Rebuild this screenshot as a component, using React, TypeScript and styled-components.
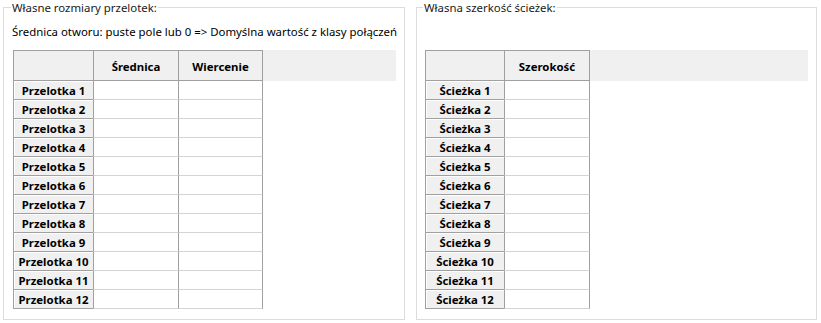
import styled, { createGlobalStyle } from "styled-components";

const GlobalStyle = createGlobalStyle`
    body {
        margin: 0;
        background: #ffffff;
        font-family: "Noto Sans", "DejaVu Sans", sans-serif;
        font-size: 11.4px;
        color: #000000;
    }
`

interface Column {
    title: string;
    width: number;
}

interface GridProps {
    rowLabel: string;
    columns: Column[];
    headWidth: number;
}

function DataGrid({rowLabel, columns, headWidth}: GridProps) {
    const rows = Array.from({length: 12}, (_, i) => `${rowLabel} ${i + 1}`);
    return (
        <Grid>
            <HeaderRow>
                <CornerCell $width={headWidth}/>
                {columns.map((c, i) => (
                    <ColumnHead key={c.title} $width={c.width} $last={i === columns.length - 1}>{c.title}</ColumnHead>
                ))}
            </HeaderRow>
            {rows.map(r => (
                <BodyRow key={r}>
                    <RowHead $width={headWidth}>{r}</RowHead>
                    {columns.map((c, i) => (
                        <DataCell key={c.title} $width={c.width} $last={i === columns.length - 1}/>
                    ))}
                </BodyRow>
            ))}
        </Grid>
    )
}

function App() {
    return (
        <>
            <GlobalStyle/>
            <Page>
                <GroupBox $width={402} $padLeft={9}>
                    <Legend>Własne rozmiary przelotek:</Legend>
                    <Hint>Średnica otworu: puste pole lub 0 =&gt; Domyślna wartość z klasy połączeń</Hint>
                    <DataGrid
                        rowLabel="Przelotka"
                        headWidth={80}
                        columns={[{title: "Średnica", width: 85}, {title: "Wiercenie", width: 85}]}
                    />
                </GroupBox>
                <GroupBox $width={401} $padLeft={8}>
                    <Legend>Własna szerkość ścieżek:</Legend>
                    <Hint/>
                    <DataGrid
                        rowLabel="Ścieżka"
                        headWidth={79}
                        columns={[{title: "Szerokość", width: 86}]}
                    />
                </GroupBox>
            </Page>
        </>
    )
}

const Page = styled.div`
    display: flex;
    gap: 11px;
    padding: 0 0 0 3px;
`

const GroupBox = styled.fieldset<{$width: number; $padLeft: number}>`
    box-sizing: border-box;
    width: ${p => p.$width}px;
    flex: none;
    min-width: 0;
    margin: 0;
    padding: 0 8px 10px ${p => p.$padLeft}px;
    border: 1px solid #dcdcdc;
`

const Legend = styled.legend`
    margin-left: -2px;
    padding: 0 1px;
    line-height: 15px;
    color: #1a1a1a;
`

const Hint = styled.div`
    height: 15px;
    line-height: 15px;
    margin: 9px 0 11px -1px;
    white-space: nowrap;
`

const Grid = styled.div`
    display: flex;
    flex-direction: column;
`

const HeaderRow = styled.div`
    display: flex;
    height: 31px;
    background: #f0f0f0;
`

const Cell = styled.div<{$width: number; $last?: boolean}>`
    box-sizing: border-box;
    width: ${p => p.$width}px;
    flex: none;
    display: flex;
    align-items: center;
    justify-content: center;
    border-left: 1px solid #a0a0a0;
    border-right: ${p => p.$last ? "1px solid #a0a0a0" : "none"};
`

const CornerCell = styled(Cell)`
    border-top: 1px solid #a0a0a0;
    border-bottom: 1px solid #a0a0a0;
    background: #f0f0f0;
`

const ColumnHead = styled(Cell)`
    border-top: 1px solid #a0a0a0;
    border-bottom: 1px solid #a0a0a0;
    background: #f0f0f0;
    font-weight: 700;
    padding-top: 1px;
`

const BodyRow = styled.div`
    display: flex;
    height: 19px;
`

const RowHead = styled(Cell)`
    background: #f0f0f0;
    border-bottom: 1px solid #a0a0a0;
    box-shadow: inset 0 1px 0 #ffffff, inset 1px 0 0 #ffffff;
    font-weight: 700;
    white-space: nowrap;
`

const DataCell = styled(Cell)`
    background: #ffffff;
    border-bottom: 1px solid #d4d4d4;
`

export default App;
